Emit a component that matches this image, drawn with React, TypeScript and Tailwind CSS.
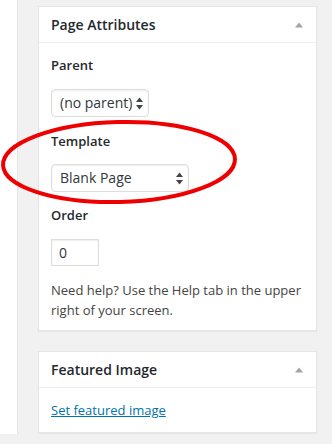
import React from "react";

const font = { fontFamily: '"Open Sans", "Noto Sans", sans-serif' };

function Caret() {
  return (
    <svg width="8" height="6" viewBox="0 0 8 6" className="shrink-0">
      <path d="M0 5.5 L4 0.5 L8 5.5 Z" fill="#a0a5aa" />
    </svg>
  );
}

function UpDown() {
  return (
    <svg width="7" height="13" viewBox="0 0 7 13" className="shrink-0">
      <path d="M0 5 L3.5 0.5 L7 5 Z" fill="#444" />
      <path d="M0 8 L3.5 12.5 L7 8 Z" fill="#444" />
    </svg>
  );
}

function Select({ label, width }: { label: string; width: string }) {
  return (
    <div
      className={`flex h-[28px] items-center justify-between rounded-[4px] border border-[#ddd] bg-white pl-[8px] pr-[5px] text-[14px] text-[#32373c] shadow-[inset_0_1px_2px_rgba(0,0,0,0.07)] ${width}`}
    >
      <span>{label}</span>
      <UpDown />
    </div>
  );
}

function PanelHeader({ title }: { title: string }) {
  return (
    <div className="flex h-[36px] items-center justify-between border-b border-[#eee] pl-[12px] pr-[13px]">
      <h2 className="text-[14px] font-semibold text-[#23282d]">{title}</h2>
      <Caret />
    </div>
  );
}

export default function App() {
  return (
    <div className="relative flex h-[444px] w-[332px] overflow-hidden bg-[#f1f1f1]" style={font}>
      <div className="h-[434px] w-[18px] border-r border-[#e5e5e5] bg-white" />

      <div className="ml-[20px] flex w-[279px] flex-col pt-[6px]">
        <section className="border border-[#e5e5e5] bg-white shadow-[0_1px_1px_rgba(0,0,0,0.04)]">
          <PanelHeader title="Page Attributes" />
          <div className="px-[12px] pb-[10px] pt-[12px] text-[13px] leading-[20px] text-[#444]">
            <p className="font-semibold text-[#23282d]">Parent</p>
            <div className="mt-[14px]">
              <Select label="(no parent)" width="w-[98px]" />
            </div>
            <p className="mt-[14px] font-semibold text-[#23282d]">Template</p>
            <div className="mt-[13px]">
              <Select label="Blank Page" width="w-[138px]" />
            </div>
            <p className="mt-[13px] font-semibold text-[#23282d]">Order</p>
            <div className="mt-[14px] flex h-[27px] w-[48px] items-center border border-[#ddd] bg-white pl-[7px] text-[14px] text-[#32373c] shadow-[inset_0_1px_2px_rgba(0,0,0,0.07)]">
              0
            </div>
            <p className="mt-[14px]">Need help? Use the Help tab in the upper right of your screen.</p>
          </div>
        </section>

        <section className="mt-[20px] border border-[#e5e5e5] bg-white shadow-[0_1px_1px_rgba(0,0,0,0.04)]">
          <PanelHeader title="Featured Image" />
          <div className="px-[12px] pb-[12px] pt-[12px] text-[13px] leading-[20px]">
            <a href="#" className="text-[#0073aa] underline">
              Set featured image
            </a>
          </div>
        </section>
      </div>

      <svg
        className="pointer-events-none absolute left-0 top-0"
        width="332"
        height="444"
        viewBox="0 0 332 444"
      >
        <ellipse
          cx="119"
          cy="162"
          rx="116"
          ry="40"
          fill="none"
          stroke="#ee0000"
          strokeWidth="4"
          transform="rotate(-1.5 119 162)"
        />
      </svg>
    </div>
  );
}
